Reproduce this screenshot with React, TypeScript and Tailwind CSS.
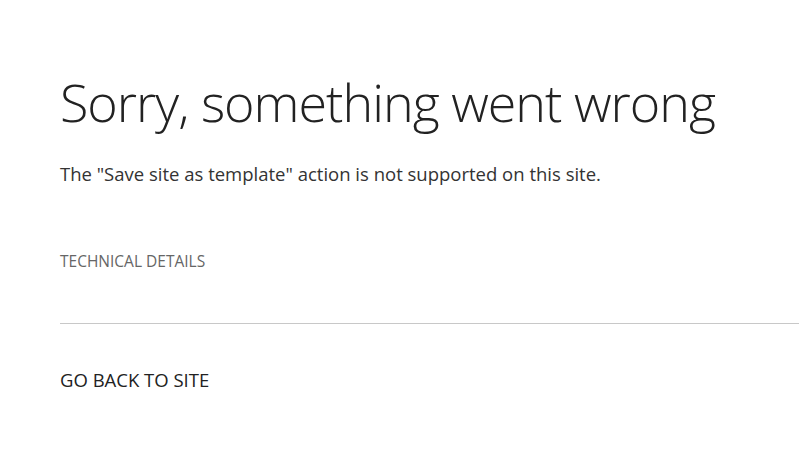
export default function App() {
  return (
    <div
      className="min-h-screen bg-white pl-[60px] pt-[66px] text-[#333]"
      style={{ fontFamily: '"Open Sans", "Noto Sans", sans-serif' }}
    >
      <h1 className="text-[52px] font-light leading-[72px] tracking-[-1px] text-[#222]">
        Sorry, something went wrong
      </h1>
      <p className="mt-[23px] text-[18.5px] leading-[26px] text-[#333]">
        The "Save site as template" action is not supported on this site.
      </p>
      <div className="mt-[64px] text-[15.5px] leading-[20px] text-[#666] uppercase">
        Technical Details
      </div>
      <div className="mt-[52px] h-px bg-[#c8c8c8]" />
      <div className="mt-[43px] text-[18.5px] leading-[26px] text-[#222] uppercase">
        Go back to site
      </div>
    </div>
  );
}
